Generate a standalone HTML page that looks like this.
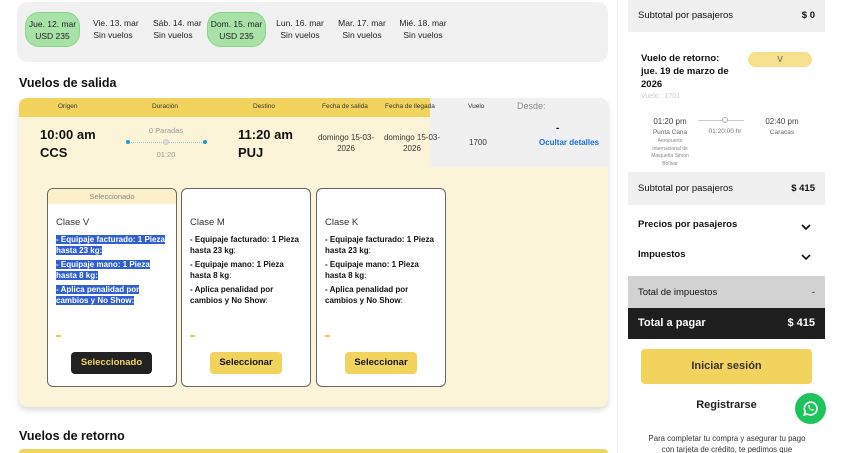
<!DOCTYPE html>
<html><head><meta charset="utf-8"><style>
*{margin:0;padding:0;box-sizing:border-box}
html,body{width:850px;height:453px;overflow:hidden}
body{background:#fff;font-family:"Liberation Sans",sans-serif;color:#111;position:relative}
.a{position:absolute}
.c{text-align:center}
.pill{position:absolute;top:12px;height:35px;font-size:8.5px;text-align:center;line-height:12px;padding-top:5px;color:#222;white-space:nowrap}
.g{background:#a8e2a8;border:1px solid #86d686;border-radius:14px}
.hd{font-size:6.5px;color:#333;top:103px;white-space:nowrap}
.card{position:absolute;top:188px;width:130px;height:199px;border:1px solid #666;border-radius:6px;background:#fff;font-size:8px}
.card .t{position:absolute;left:8px;top:28px;font-size:9.5px;color:#333}
.card .l{position:absolute;left:8px;width:112px;font-weight:bold;line-height:11px}
.sel{background:#2f5fd0;color:#fff}
.btn{position:absolute;top:163px;height:22px;border-radius:4px;font-size:9.5px;font-weight:bold;text-align:center;line-height:22px}
.dash{position:absolute;left:8px;top:146px;width:5px;height:2px;background:#f0c94a}
.rp{position:absolute;left:628px;width:197px;font-size:9.5px}
</style></head><body>
<div class="a" style="left:17px;top:2px;width:591px;height:60px;background:#f1f1f1;border-radius:10px"></div>
<div class="pill g" style="left:25px;width:55px">Jue. 12. mar<br>USD 235</div>
<div class="pill" style="left:93px;width:40px">Vie. 13. mar<br>Sin vuelos</div>
<div class="pill" style="left:153px;width:40px">Sáb. 14. mar<br>Sin vuelos</div>
<div class="pill g" style="left:207px;width:59px">Dom. 15. mar<br>USD 235</div>
<div class="pill" style="left:276px;width:48px">Lun. 16. mar<br>Sin vuelos</div>
<div class="pill" style="left:338px;width:48px">Mar. 17. mar<br>Sin vuelos</div>
<div class="pill" style="left:399px;width:48px">Mié. 18. mar<br>Sin vuelos</div>

<div class="a" style="left:19px;top:76px;font-size:12.5px;font-weight:bold">Vuelos de salida</div>
<div class="a" style="left:19px;top:98px;width:589px;height:309px;background:#fcf4d8;border-radius:8px;box-shadow:0 3px 6px rgba(0,0,0,.15);overflow:hidden">
 <div class="a" style="left:0;top:0;width:411px;height:19px;background:#f2d35e"></div>
 <div class="a" style="left:411px;top:0;width:178px;height:69px;background:#f0f0f0"></div>
</div>
<div class="a hd" style="left:58px">Origen</div>
<div class="a hd" style="left:152px">Duración</div>
<div class="a hd" style="left:253px">Destino</div>
<div class="a hd" style="left:322px">Fecha de salida</div>
<div class="a hd" style="left:385px">Fecha de llegada</div>
<div class="a hd" style="left:468px">Vuelo</div>
<div class="a" style="left:517px;top:101px;font-size:9px;color:#888">Desde:</div>
<div class="a" style="left:40px;top:126px;font-size:13px;line-height:18px;font-weight:bold">10:00 am<br>CCS</div>
<div class="a" style="left:238px;top:126px;font-size:13px;line-height:18px;font-weight:bold">11:20 am<br>PUJ</div>
<div class="a c" style="left:140px;top:126px;width:52px;font-size:7.5px;color:#999">0 Paradas</div>
<div class="a" style="left:127px;top:142px;width:79px;border-top:1px dotted #9cc"></div>
<div class="a" style="left:126px;top:140px;width:4px;height:4px;border-radius:2px;background:#1a9ad0"></div>
<div class="a" style="left:203px;top:140px;width:4px;height:4px;border-radius:2px;background:#1a9ad0"></div>
<div class="a" style="left:163px;top:139px;width:6px;height:6px;border-radius:3px;background:#ddd;border:1px solid #ccc"></div>
<div class="a c" style="left:140px;top:150px;width:52px;font-size:7.5px;color:#999">01:20</div>
<div class="a c" style="left:312px;top:132px;width:68px;font-size:8px;line-height:11px;color:#333">domingo 15-03-<br>2026</div>
<div class="a c" style="left:378px;top:132px;width:68px;font-size:8px;line-height:11px;color:#333">domingo 15-03-<br>2026</div>
<div class="a" style="left:469px;top:138px;font-size:8px;color:#333">1700</div>
<div class="a" style="left:556px;top:123px;font-size:10px;font-weight:bold">-</div>
<div class="a" style="left:539px;top:138px;font-size:8px;color:#1a6ed8;font-weight:bold">Ocultar detalles</div>

<div class="card" style="left:47px;overflow:hidden">
 <div class="a c" style="left:0;top:0;width:128px;height:15px;background:#fbf0c8;font-size:7.5px;color:#888;line-height:15px">Seleccionado</div>
 <div class="t">Clase V</div>
 <div class="l" style="top:45px"><span class="sel">- Equipaje facturado: 1 Pieza hasta 23 kg:</span></div>
 <div class="l" style="top:70px"><span class="sel">- Equipaje mano: 1 Pieza hasta 8 kg:</span></div>
 <div class="l" style="top:95px"><span class="sel">- Aplica penalidad por cambios y No Show:</span></div>
 <div class="dash"></div>
 <div class="btn" style="left:23px;width:81px;background:#222;color:#f2d35e">Seleccionado</div>
</div>
<div class="card" style="left:181px">
 <div class="t">Clase M</div>
 <div class="l" style="top:45px">- Equipaje facturado: 1 Pieza hasta 23 kg<span style="font-weight:normal">:</span></div>
 <div class="l" style="top:70px">- Equipaje mano: 1 Pieza hasta 8 kg<span style="font-weight:normal">:</span></div>
 <div class="l" style="top:95px">- Aplica penalidad por cambios y No Show<span style="font-weight:normal">:</span></div>
 <div class="dash"></div>
 <div class="btn" style="left:28px;width:72px;background:#f2d35e">Seleccionar</div>
</div>
<div class="card" style="left:316px">
 <div class="t">Clase K</div>
 <div class="l" style="top:45px">- Equipaje facturado: 1 Pieza hasta 23 kg<span style="font-weight:normal">:</span></div>
 <div class="l" style="top:70px">- Equipaje mano: 1 Pieza hasta 8 kg<span style="font-weight:normal">:</span></div>
 <div class="l" style="top:95px">- Aplica penalidad por cambios y No Show<span style="font-weight:normal">:</span></div>
 <div class="dash"></div>
 <div class="btn" style="left:28px;width:72px;background:#f2d35e">Seleccionar</div>
</div>

<div class="a" style="left:19px;top:429px;font-size:12.5px;font-weight:bold">Vuelos de retorno</div>
<div class="a" style="left:19px;top:449px;width:589px;height:4px;background:#f2d35e;border-radius:8px 8px 0 0"></div>

<div class="a" style="left:617px;top:0;width:1px;height:453px;background:#eee"></div>
<div class="rp" style="top:0;height:32px;background:#f0f0f0"></div>
<div class="rp" style="top:10px;padding:0 10px;display:flex;justify-content:space-between"><span>Subtotal por pasajeros</span><b>$ 0</b></div>
<div class="a" style="left:641px;top:52px;font-size:9.5px;font-weight:bold;line-height:13px">Vuelo de retorno:<br>jue. 19 de marzo de<br>2026</div>
<div class="a c" style="left:748px;top:52px;width:64px;height:15px;background:#f5e08e;border-radius:8px;font-size:8px;line-height:15px;color:#555">V</div>
<div class="a" style="left:641px;top:93px;font-size:7px;color:#ccc">Vuelo : 1701</div>
<div class="a c" style="left:645px;top:117px;width:50px;font-size:8px;color:#444;line-height:10px">01:20 pm<br><span style="font-size:6.5px;color:#666">Punta Cana</span></div>
<div class="a c" style="left:643px;top:138px;width:54px;font-size:5px;color:#888;line-height:7.5px">Aeropuerto Internacional de Maiquetía Simón Bolívar</div>
<div class="a" style="left:698px;top:120px;width:46px;border-top:1px solid #ccc"></div>
<div class="a" style="left:722px;top:117px;width:6px;height:6px;border:1px solid #aaa;border-radius:3px;background:#fff"></div>
<div class="a c" style="left:700px;top:128px;width:50px;font-size:6.5px;color:#777">01:20:00 hr</div>
<div class="a c" style="left:757px;top:117px;width:50px;font-size:8px;color:#444;line-height:10px">02:40 pm<br><span style="font-size:6.5px;color:#666">Caracas</span></div>
<div class="rp" style="top:172px;height:33px;background:#f0f0f0"></div>
<div class="rp" style="top:183px;padding:0 10px;display:flex;justify-content:space-between"><span>Subtotal por pasajeros</span><b>$ 415</b></div>
<div class="rp" style="top:219px;padding:0 10px;font-weight:bold">Precios por pasajeros</div>
<div class="rp" style="top:249px;padding:0 10px;font-weight:bold">Impuestos</div>
<svg class="a" style="left:801px;top:223px" width="10" height="8"><path d="M1 2l4 4 4-4" stroke="#111" stroke-width="1.6" fill="none"/></svg>
<svg class="a" style="left:801px;top:253px" width="10" height="8"><path d="M1 2l4 4 4-4" stroke="#111" stroke-width="1.6" fill="none"/></svg>
<div class="rp" style="top:276px;height:32px;background:#d2d2d2"></div>
<div class="rp" style="top:287px;padding:0 10px;display:flex;justify-content:space-between"><span>Total de impuestos</span><span>-</span></div>
<div class="rp" style="top:308px;height:31px;background:#1f1e1f"></div>
<div class="rp" style="top:317px;padding:0 10px;display:flex;justify-content:space-between;color:#fff;font-weight:bold;font-size:11px"><span>Total a pagar</span><span>$ 415</span></div>
<div class="a c" style="left:641px;top:349px;width:171px;height:35px;background:#f2d35e;border-radius:4px;font-size:11px;font-weight:bold;line-height:35px;color:#333">Iniciar sesión</div>
<div class="a c" style="left:641px;top:399px;width:171px;font-size:11px;font-weight:bold;color:#222">Registrarse</div>
<div class="a" style="left:795px;top:393px;width:31px;height:31px;border-radius:50%;background:#1fc35b"></div>
<svg class="a" style="left:801px;top:399px" width="19" height="19" viewBox="0 0 24 24"><path d="M4 20l1.3-4A8 8 0 1 1 8.3 19z" fill="none" stroke="#fff" stroke-width="2"/><path d="M9 8c0 3 3 6.5 6.5 7l1-1.5-2-1-1 .8c-1.2-.6-2.2-1.6-2.8-2.8l.8-1-1-2z" fill="#fff"/></svg>
<div class="a c" style="left:645px;top:433px;width:164px;font-size:7.8px;line-height:11px;color:#333">Para completar tu compra y asegurar tu pago con tarjeta de crédito, te pedimos que</div>
</body></html>
